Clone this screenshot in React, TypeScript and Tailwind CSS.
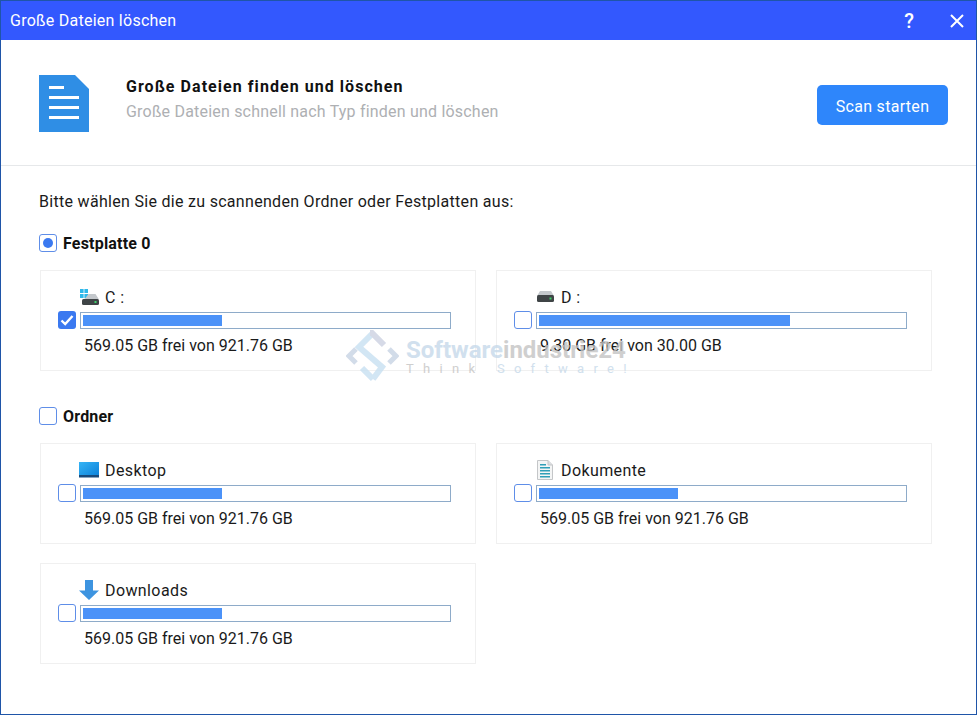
const font = { fontFamily: 'Roboto, "Noto Sans", sans-serif' };

function HddIcon({ win }: { win?: boolean }) {
  if (win) {
    return (
      <svg width="20" height="17" viewBox="0 0 20 17" className="block">
        <g fill="#2fb8ea">
          <rect x="0" y="0" width="3.6" height="4" />
          <rect x="4.4" y="0" width="3.6" height="4" />
          <rect x="0" y="5" width="3.6" height="4" />
          <rect x="4.4" y="5" width="3.6" height="4" />
        </g>
        <path d="M5 9.5 L8.5 5 H15.5 L19 10.5 H2.5Z" fill="#c4c8cc" />
        <rect x="2" y="10" width="17" height="6" rx="1.5" fill="#3f4446" />
        <rect x="14.5" y="12" width="2" height="2" fill="#3fd06a" />
      </svg>
    );
  }
  return (
    <svg width="20" height="16" viewBox="0 0 20 16" className="block">
      <path d="M1 7 L4 2 H15 L18 7Z" fill="#c4c8cc" />
      <rect x="1" y="6" width="17" height="7" rx="1.5" fill="#3f4446" />
      <rect x="13.5" y="8.5" width="2" height="2" fill="#3fd06a" />
    </svg>
  );
}

function DesktopIcon() {
  return (
    <svg width="20" height="16" viewBox="0 0 20 16" className="-ml-px block">
      <defs>
        <linearGradient id="dk" x1="0" y1="0" x2="1" y2="1">
          <stop offset="0" stopColor="#36b4f5" />
          <stop offset="1" stopColor="#0a7fd8" />
        </linearGradient>
      </defs>
      <rect x="0" y="0" width="20" height="15" fill="url(#dk)" />
      <rect x="0" y="13" width="20" height="2.5" fill="#174a7c" />
    </svg>
  );
}

function DocIcon() {
  return (
    <svg width="16" height="20" viewBox="0 0 16 20" className="ml-px block">
      <path d="M.5.5H11L15.5 5V19.5H.5Z" fill="#f4f5f5" stroke="#c4c6c8" />
      <path d="M11 .5V5H15.5" fill="#dcdfe1" stroke="#c4c6c8" />
      <g fill="#2f9fb8">
        <rect x="3" y="4" width="6" height="1.5" />
        <rect x="3" y="7" width="10" height="1.5" />
        <rect x="3" y="10" width="10" height="1.5" />
        <rect x="3" y="13" width="10" height="1.5" />
        <rect x="3" y="16" width="10" height="1.5" />
      </g>
    </svg>
  );
}

function ArrowIcon() {
  return (
    <svg width="20" height="20" viewBox="0 0 20 20" className="-ml-px block">
      <path d="M6 0H14V10.5H20L10 20L0 10.5H6Z" fill="#3d94e0" />
    </svg>
  );
}

function Check({ checked }: { checked?: boolean }) {
  return checked ? (
    <div className="flex h-[18px] w-[18px] shrink-0 items-center justify-center rounded-[3px] bg-[#3b79f0]">
      <svg width="14" height="12" viewBox="0 0 14 12">
        <path d="M1.5 6.5L5.2 10L12.5 2" fill="none" stroke="#fff" strokeWidth="2.4" />
      </svg>
    </div>
  ) : (
    <div className="h-[18px] w-[18px] shrink-0 rounded-[3px] border border-[#5f8ee8] bg-white" />
  );
}

function DriveCard({
  icon,
  label,
  used,
  info,
}: {
  icon: React.ReactNode;
  label: string;
  used: number;
  info: string;
}) {
  return (
    <div className="h-[101px] border border-[#f0f0f0] bg-white pl-[17px] pt-[15px]">
      <div className="flex h-[24px] items-center pl-[22px]">
        <div className="flex w-[25px] items-center pb-[2px]">{icon}</div>
        <span className="text-[16px] tracking-[0.4px] text-[#1a1a1a]">{label}</span>
      </div>
      <div className="mt-[1px] flex items-center gap-[4px]">
        <Check checked={label === 'C :'} />
        <div className="h-[17px] w-[371px] border border-[#8eabc9] bg-white p-[2px]">
          <div className="h-full bg-[#4b92f8]" style={{ width: `${used}%` }} />
        </div>
      </div>
      <div className="mt-[7px] pl-[26px] text-[16px] leading-[20px] text-[#1a1a1a]">{info}</div>
    </div>
  );
}

export default function App() {
  return (
    <div
      className="relative flex h-[715px] w-[977px] flex-col overflow-hidden border-x border-b border-[#1f55a8] bg-white"
      style={font}
    >
      <div className="flex h-[40px] shrink-0 items-center justify-between border-t border-[#1f55a8] bg-[#3358fe] pl-[9px] pr-[12px] pt-px text-white">
        <span className="text-[16px] tracking-[0.25px]">Große Dateien löschen</span>
        <div className="flex items-center gap-[36px]">
          <span className="text-[20px] font-medium leading-none">?</span>
          <svg width="14" height="14" viewBox="0 0 14 14">
            <path d="M1 1L13 13M13 1L1 13" stroke="#fff" strokeWidth="2" />
          </svg>
        </div>
      </div>

      <div className="flex h-[126px] shrink-0 items-start border-b border-[#e6e8ea] pl-[38px] pr-[28px]">
        <svg width="50" height="57" viewBox="0 0 50 57" className="mt-[35px] block">
          <path d="M0 0H36L50 14V57H0Z" fill="#2f8ee5" />
          <g fill="#fff">
            <rect x="10" y="11" width="15" height="3" />
            <rect x="10" y="21" width="30" height="3" />
            <rect x="10" y="31" width="30" height="3" />
            <rect x="10" y="41" width="30" height="3" />
          </g>
        </svg>
        <div className="ml-[37px] mt-[36px] flex-1">
          <div className="text-[16px] font-bold leading-[22px] tracking-[1.05px] text-[#111]">
            Große Dateien finden und löschen
          </div>
          <div className="mt-[3px] text-[16px] leading-[22px] tracking-[0.2px] text-[#aeb0b3]">
            Große Dateien schnell nach Typ finden und löschen
          </div>
        </div>
        <button className="mt-[45px] h-[40px] w-[131px] rounded-[5px] bg-[#2e86fb] pt-[3px] text-[16px] tracking-[0.3px] text-white">
          Scan starten
        </button>
      </div>

      <div className="flex flex-1 flex-col pl-[38px] pr-[44px]">
        <div className="mt-[25px] text-[16px] leading-[22px] tracking-[0.3px] text-[#1a1a1a]">
          Bitte wählen Sie die zu scannenden Ordner oder Festplatten aus:
        </div>

        <div className="mt-[20px] flex h-[22px] items-center gap-[6px]">
          <div className="mb-[2px] flex h-[18px] w-[18px] items-center justify-center rounded-[3px] border border-[#5f8ee8]">
            <div className="h-[10px] w-[10px] rounded-full bg-[#3b79f0]" />
          </div>
          <span className="text-[16px] font-bold tracking-[0.2px] text-[#111]">Festplatte 0</span>
        </div>
        <div className="ml-px mt-[15px] grid grid-cols-[436px_436px] gap-x-[20px]">
          <DriveCard icon={<HddIcon win />} label="C :" used={38} info="569.05 GB frei von 921.76 GB" />
          <DriveCard icon={<HddIcon />} label="D :" used={68.7} info="9.30 GB frei von 30.00 GB" />
        </div>

        <div className="mt-[35px] flex h-[22px] items-center gap-[6px]">
          <div className="mb-[2px]">
            <Check />
          </div>
          <span className="text-[16px] font-bold tracking-[0.2px] text-[#111]">Ordner</span>
        </div>
        <div className="ml-px mt-[15px] grid grid-cols-[436px_436px] gap-x-[20px] gap-y-[19px]">
          <DriveCard icon={<DesktopIcon />} label="Desktop" used={38} info="569.05 GB frei von 921.76 GB" />
          <DriveCard icon={<DocIcon />} label="Dokumente" used={38} info="569.05 GB frei von 921.76 GB" />
          <DriveCard icon={<ArrowIcon />} label="Downloads" used={38} info="569.05 GB frei von 921.76 GB" />
        </div>
      </div>

      {/* watermark */}
      <div className="pointer-events-none absolute left-[345px] top-[330px] flex items-center opacity-80">
        <svg width="53" height="54" viewBox="0 0 53 54">
          <path d="M26 4L13 17L36 37L27 49" fill="none" stroke="#c8e0f2" strokeWidth="6" />
          <path d="M27 49L16 38" fill="none" stroke="#c8e0f2" strokeWidth="6" />
          <path d="M24 3L26 3L38 15" fill="none" stroke="#ccd2e2" strokeWidth="6" />
          <path d="M10 19L3 26L10 33M43 19L50 26L43 33" fill="none" stroke="#c8d4e4" strokeWidth="5" />
        </svg>
        <div className="ml-[7px]">
          <div className="text-[24px] font-bold leading-[24px] text-[#c6d9ea]">
            Software<span className="text-[#c4c4c4]">industrie24</span>
          </div>
          <div className="text-[13px] leading-[14px] tracking-[9.3px] text-[#c6d9ea]">
            <span className="text-[#c4c4c4]">Think</span> Software!
          </div>
        </div>
      </div>
    </div>
  );
}
